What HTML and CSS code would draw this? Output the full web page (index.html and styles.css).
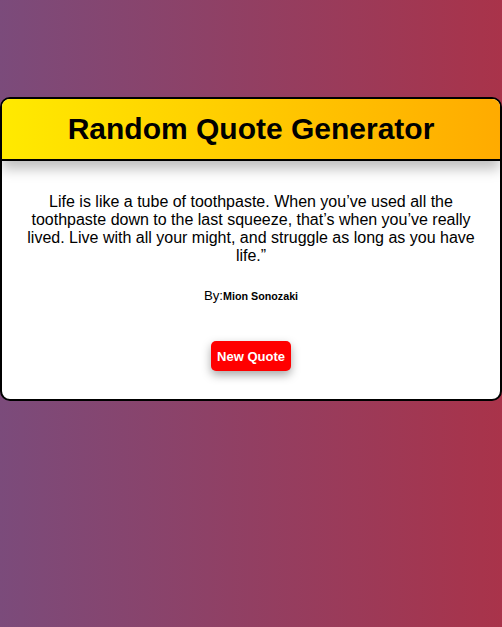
FILE: index.html
```html
<!DOCTYPE html>
<html>
<head>
<meta charset="utf-8">
<link rel="stylesheet" href="styles.css">
</head>
<body>
<div class="page">
  <div class="card">
    <div class="header">
      <h1 class="title">Random Quote Generator</h1>
    </div>
    <div class="content">
      <p class="quote">Life is like a tube of toothpaste. When you’ve used all the toothpaste down to the last squeeze, that’s when you’ve really lived. Live with all your might, and struggle as long as you have life.”</p>
      <p class="author">By:<span class="name">Mion Sonozaki</span></p>
      <button class="btn">New Quote</button>
    </div>
  </div>
</div>
</body>
</html>
```
FILE: styles.css
```css
html, body {
  margin: 0;
  padding: 0;
  height: 100%;
}
body {
  background: linear-gradient(to right, #7b4b7b, #a9334a);
  font-family: "Liberation Sans", Arial, sans-serif;
}
.page {
  padding-top: 97px;
}
.card {
  background: #fff;
  border: 2px solid #000;
  border-radius: 10px;
  overflow: hidden;
}
.header {
  background: linear-gradient(to right, #ffea00, #ffab00);
  border-bottom: 2px solid #000;
  box-shadow: 0 8px 12px rgba(0,0,0,0.25);
  position: relative;
  height: 60px;
  display: flex;
  align-items: center;
  justify-content: center;
}
.title {
  margin: 0;
  font-size: 30px;
  font-weight: bold;
  color: #000;
}
.content {
  padding: 32px 25px 28px;
  text-align: center;
}
.quote {
  margin: 0;
  font-size: 16px;
  color: #000;
}
.author {
  margin: 23px 0 0;
  font-size: 13.28px;
  font-weight: normal;
}
.name {
  font-size: 10.72px;
  font-weight: bold;
}
.btn {
  margin-top: 38px;
  background: #ff0000;
  color: #fff;
  border: none;
  border-radius: 5px;
  font-family: "Liberation Sans", Arial, sans-serif;
  font-weight: bold;
  font-size: 13px;
  padding: 0 6px;
  height: 30px;
  box-shadow: 0 4px 10px rgba(0,0,0,0.35);
}
```
